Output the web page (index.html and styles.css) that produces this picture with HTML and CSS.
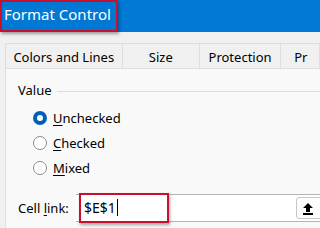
FILE: index.html
```html
<!DOCTYPE html>
<html lang="en">
<head>
    <meta charset="UTF-8">
    <title>Format Control</title>
    <link rel="stylesheet" href="styles.css">
</head>
<body>
    <div class="dialog">
        <!-- title bar -->
        <div class="title-bar">
            <span class="title mark">Format Control</span>
        </div>

        <!-- tabs -->
        <div class="tabs">
            <div class="tab tab-colors">Colors and Lines</div>
            <div class="tab tab-size">Size</div>
            <div class="tab tab-protect">Protection</div>
            <div class="tab tab-props">Pr</div>
        </div>

        <!-- panel -->
        <div class="panel">
            <div class="group-label">
                <span>Value</span>
                <span class="group-line"></span>
            </div>
            <div class="radio-list">
                <div class="radio-row">
                    <span class="radio on"></span><span><u>U</u>nchecked</span>
                </div>
                <div class="radio-row">
                    <span class="radio"></span><span><u>C</u>hecked</span>
                </div>
                <div class="radio-row">
                    <span class="radio"></span><span><u>M</u>ixed</span>
                </div>
            </div>
            <div class="link-row">
                <span class="link-label">Cell <u>l</u>ink:</span>
                <div class="link-input">
                    <span class="link-value mark">$E$1<span class="caret"></span></span>
                    <span class="pick-button">
                        <svg width="12" height="13" viewBox="0 0 12 13">
                            <path d="M6 1 L11 6 L8 6 L8 10 L4 10 L4 6 L1 6 Z" fill="#000"/>
                            <rect x="1" y="11" width="10" height="2" fill="#000"/>
                        </svg>
                    </span>
                </div>
            </div>
        </div>
    </div>
</body>
</html>
```

FILE: styles.css
```css
/* base */
body {
    margin: 0;
    font-family: "Noto Sans", "Open Sans", Arial, sans-serif;
    font-size: 13px;
    color: #000;
    background-color: #f0f0f0;
}
* {
    box-sizing: border-box;
}
u {
    text-decoration-thickness: 1px;
    text-underline-offset: 2px;
}

.dialog {
    width: 320px;
    height: 228px;
    overflow: hidden;
    display: flex;
    flex-direction: column;
}

/* red annotation box */
.mark {
    border: 2px solid #c8102e;
    box-shadow: 1px 2px 3px rgba(0, 0, 0, 0.35);
}

/* title bar */
.title-bar {
    height: 32px;
    background-color: #0078d4;
    display: flex;
    align-items: stretch;
    flex-shrink: 0;
}
.title {
    width: 118px;
    color: #fff;
    font-size: 15px;
    padding: 2px 0 0 2px;
    line-height: 20px;
}

/* tabs */
.tabs {
    display: flex;
    margin-top: 11px;
    padding-left: 5px;
    flex-shrink: 0;
}
.tab {
    height: 25px;
    line-height: 26px;
    text-align: center;
    border: 1px solid #dedede;
    border-left: none;
    border-bottom: none;
    background-color: #f0f0f0;
    white-space: nowrap;
}
.tab-colors { width: 123px; border-left: 1px solid #dedede; }
.tab-size { width: 81px; }
.tab-protect { width: 85px; }
.tab-props { width: 40px; text-align: left; padding-left: 13px; }

/* panel */
.panel {
    flex-grow: 1;
    margin-left: 5px;
    background-color: #f9f9f9;
    border-left: 1px solid #dedede;
    border-top: 1px solid #dedede;
    padding: 12px 0 0 12px;
}
.group-label {
    display: flex;
    align-items: center;
    height: 18px;
}
.group-line {
    flex-grow: 1;
    margin-left: 5px;
    margin-top: 2px;
    border-top: 1px solid #dcdcdc;
}
.radio-list {
    padding: 6px 0 0 15px;
}
.radio-row {
    display: flex;
    align-items: center;
    height: 25px;
}
.radio {
    width: 14px;
    height: 14px;
    border-radius: 50%;
    border: 1px solid #8a8a8a;
    background-color: #fff;
    margin-right: 6px;
}
.radio.on {
    border: 4px solid #005fb8;
    background-color: #fff;
}

/* cell link */
.link-row {
    display: flex;
    align-items: center;
    margin-top: 14px;
}
.link-label {
    width: 58px;
    flex-shrink: 0;
    white-space: nowrap;
}
.link-input {
    flex-grow: 1;
    height: 28px;
    display: flex;
    align-items: center;
    justify-content: space-between;
    background-color: #fff;
    border-top: 1px solid #b4b4b4;
    border-bottom: 1px solid #b4b4b4;
}
.link-value {
    width: 90px;
    height: 30px;
    margin-left: 3px;
    padding-left: 3px;
    line-height: 26px;
    font-size: 14px;
}
.caret {
    display: inline-block;
    width: 1px;
    height: 17px;
    background-color: #000;
    vertical-align: -3px;
    margin-left: 1px;
}
.pick-button {
    width: 28px;
    height: 22px;
    border: 1px solid #c8c8c8;
    border-radius: 3px;
    background-color: #fdfdfd;
    display: flex;
    align-items: center;
    justify-content: center;
    margin-right: -4px;
    padding-right: 4px;
}
```
